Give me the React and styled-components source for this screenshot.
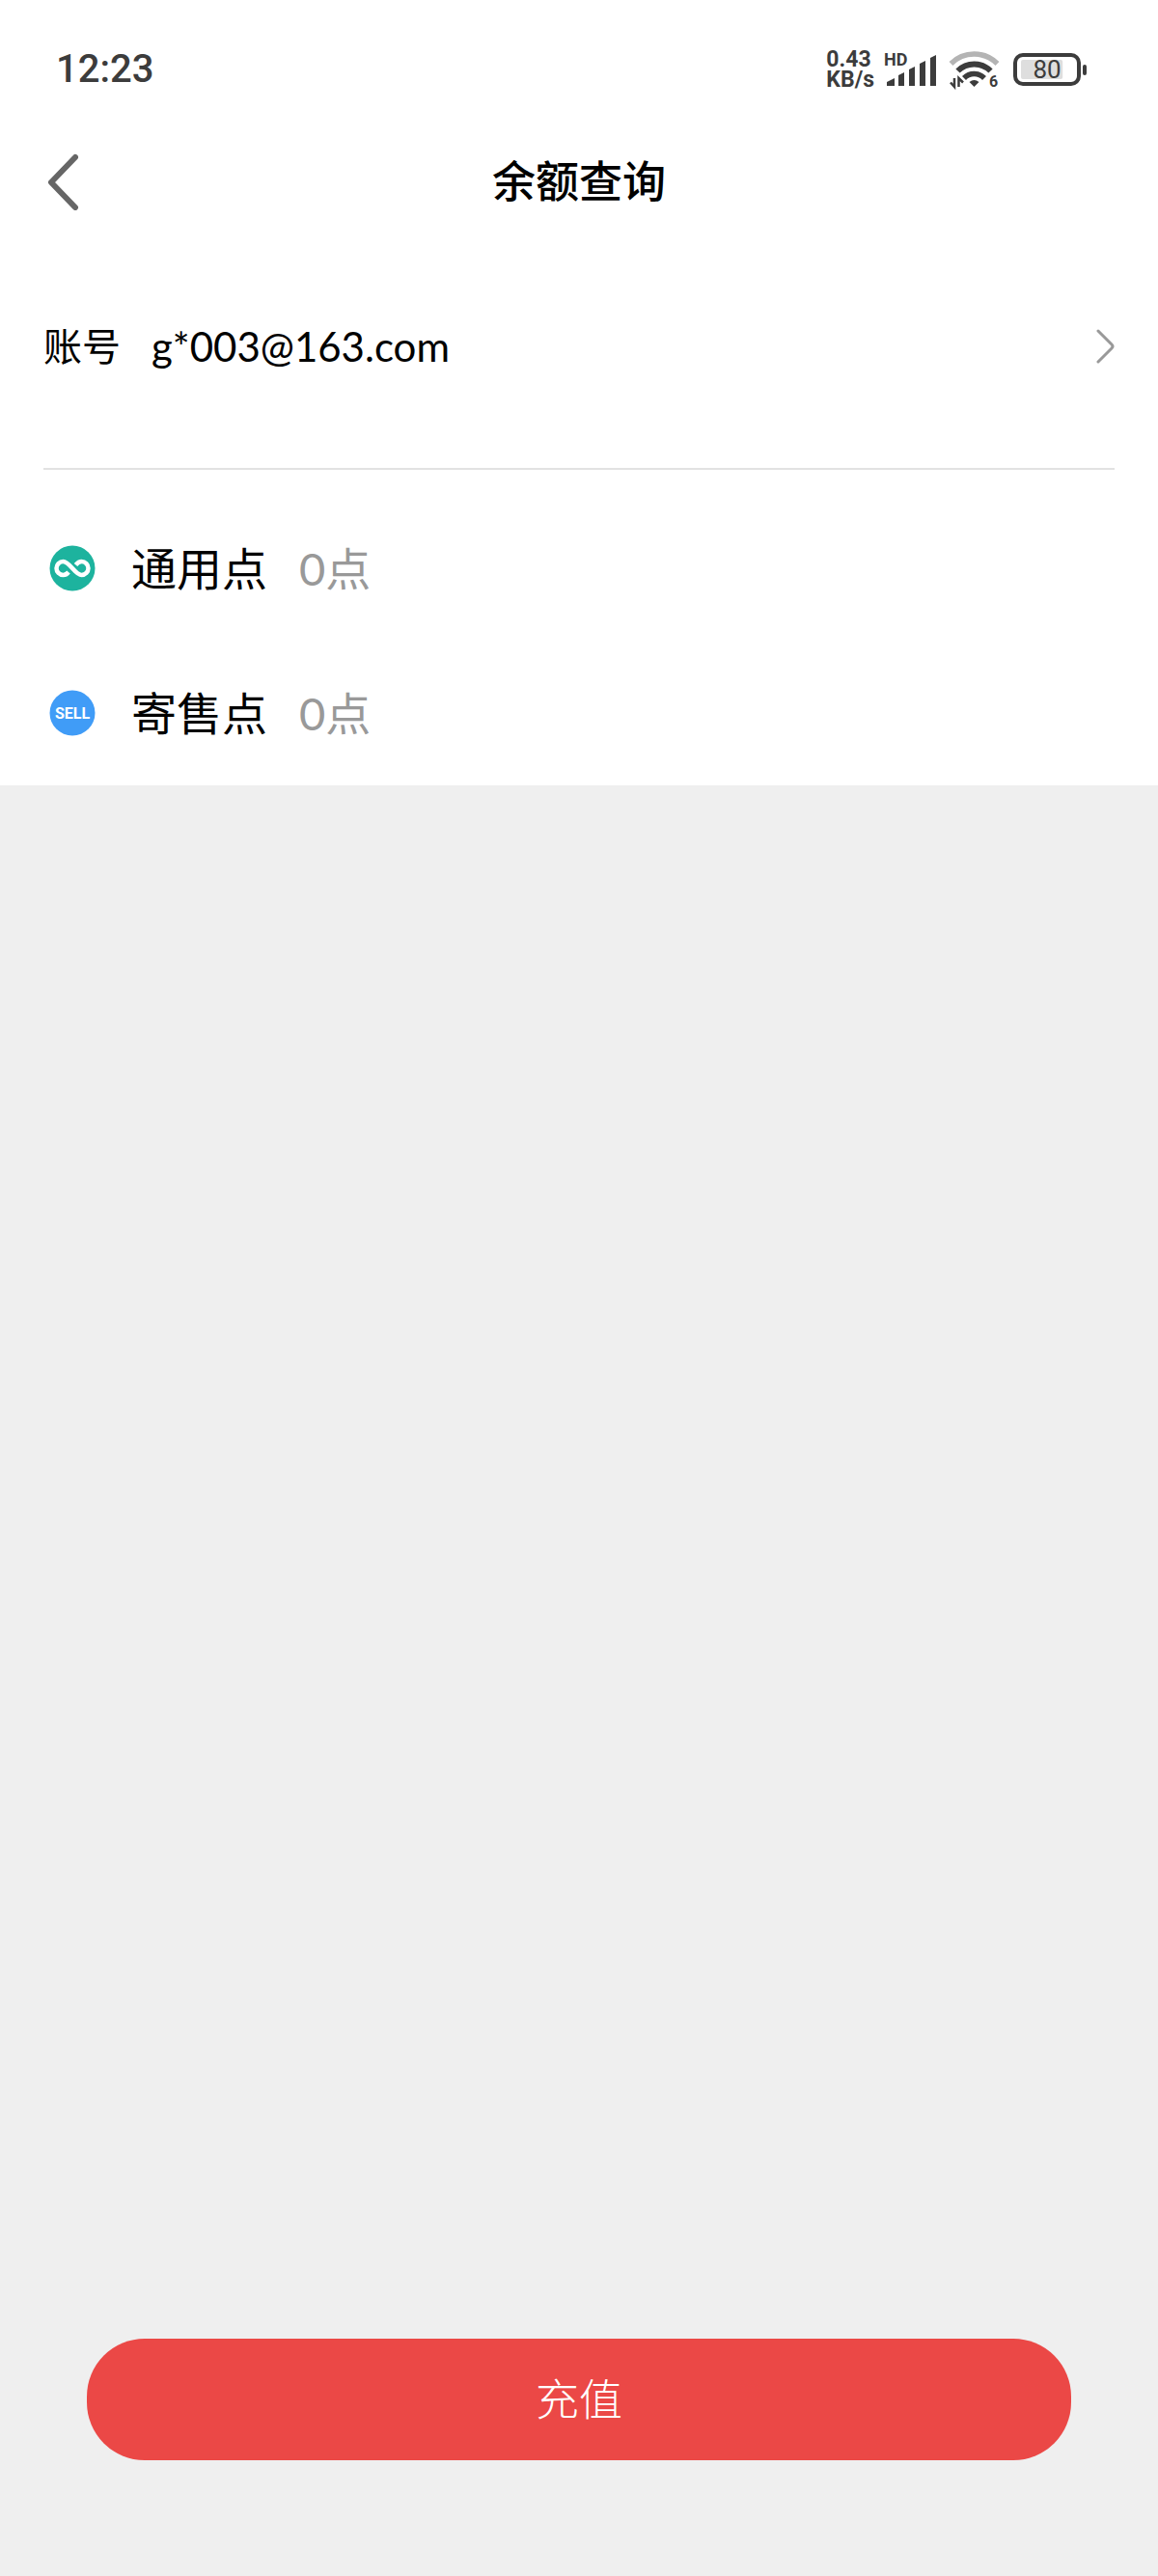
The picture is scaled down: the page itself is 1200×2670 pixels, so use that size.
// src/App.jsx

import React from 'react';
import styled, { createGlobalStyle } from 'styled-components';

const GlobalStyle = createGlobalStyle`
  *,
  *::before,
  *::after {
    box-sizing: border-box;
  }

  body {
    margin: 0;
    background-color: #efefef;
    color: #000;
    font-family: Lato, 'Noto Sans CJK SC', sans-serif;
  }

  button {
    margin: 0;
    padding: 0;
    border: none;
    background: none;
    color: inherit;
    font: inherit;
    cursor: pointer;
  }

  svg {
    display: block;
    flex-shrink: 0;
  }
`;

const Page = styled.div`
  display: flex;
  flex-direction: column;
  min-height: 100vh;
`;

// System status bar
const StatusBar = styled.div`
  display: flex;
  align-items: center;
  justify-content: space-between;
  height: 144px;
  padding: 0 74px 0 58px;
  background-color: #fff;
  color: #3c3c3c;
  font-family: Roboto, sans-serif;
`;

const Clock = styled.time`
  font-size: 40px;
  line-height: 48px;
  font-weight: 500;
`;

const StatusIcons = styled.div`
  display: flex;
  align-items: center;
  gap: 12px;
`;

const NetworkGroup = styled.div`
  display: flex;
  align-items: center;
  gap: 8px;
`;

const NetSpeed = styled.div`
  display: flex;
  flex-direction: column;
  font-size: 23px;
  line-height: 21px;
  font-weight: 700;
`;

// Page header with centered title
const Header = styled.header`
  display: grid;
  grid-template-columns: 88px 1fr 88px;
  align-items: center;
  height: 88px;
  padding: 0 22px;
  background-color: #fff;
`;

const BackButton = styled.button`
  display: flex;
  align-items: center;
  justify-content: center;
  height: 88px;
`;

const Title = styled.h1`
  margin: 0;
  font-size: 45px;
  line-height: 56px;
  font-weight: 500;
  text-align: center;
`;

const Panel = styled.section`
  padding: 0 45px;
  background-color: #fff;
`;

const AccountRow = styled.button`
  display: flex;
  align-items: center;
  width: 100%;
  height: 255px;
  border-bottom: 2px solid #e2e2e2;
  font-size: 40px;
  line-height: 48px;
  text-align: left;
`;

const AccountName = styled.span`
  flex: 1;
  margin-left: 32px;
  font-size: 42px;
`;

const PointList = styled.ul`
  margin: 0;
  padding: 27px 0 0 6px;
  list-style: none;
`;

const PointRow = styled.li`
  display: flex;
  align-items: center;
  height: 150px;
  font-size: 47px;
  line-height: 56px;
`;

const PointName = styled.span`
  margin-left: 37px;
`;

const PointValue = styled.span`
  margin-left: 33px;
  color: #999;
`;

// Footer sticks to the bottom of the page
const Footer = styled.footer`
  margin-top: auto;
  padding: 0 90px 120px;
`;

const RechargeButton = styled.button`
  width: 100%;
  height: 126px;
  border-radius: 60px;
  background-color: #eb4846;
  color: #fff;
  font-size: 45px;
  line-height: 56px;
  font-weight: 300;
`;

const SignalIcon = () => (
  <svg width="56" height="42" viewBox="-4 -4 56 42" fill="currentColor" aria-hidden="true">
    <text x="-2" y="13" fontSize="18" fontWeight="700">HD</text>
    <path d="M1 34V30L9 26V34Z" />
    <path d="M13 34V23L19 20V34Z" />
    <path d="M24 34V17L30 14V34Z" />
    <path d="M35 34V11L41 8V34Z" />
    <path d="M46 34V5L52 2V34Z" />
  </svg>
);

const WifiIcon = () => (
  <svg width="56" height="44" viewBox="-2 -3 56 44" fill="none" aria-hidden="true">
    <path d="M1.500 13A34 34 0 0 1 49.500 13" stroke="#b4b4b4" strokeWidth="5.500" />
    <path d="M8.500 20.500A24 24 0 0 1 42.500 20.500" stroke="currentColor" strokeWidth="6" />
    <path d="M15 28A14.500 14.500 0 0 1 36 28" stroke="currentColor" strokeWidth="5.500" />
    <path d="M20.500 32Q25.500 28 30.500 32L25.500 37Z" fill="currentColor" />
    <path d="M5 28V37L1 32.500M9.500 37V28L14 32.500" stroke="currentColor" strokeWidth="2.500" />
    <text x="41" y="37" fontSize="16" fontWeight="700" fill="currentColor">6</text>
  </svg>
);

const BatteryIcon = ({ level }) => (
  <svg width="76" height="34" viewBox="0 0 76 34" fill="none" aria-hidden="true">
    <rect x="8" y="7" width={level * 0.54} height="20" rx="2" fill="#dedede" />
    <rect x="2" y="2" width="66" height="30" rx="8" stroke="currentColor" strokeWidth="4" />
    <rect x="72" y="12" width="4" height="11" rx="2" fill="currentColor" />
    <text x="35" y="26" fontSize="26" textAnchor="middle" fill="currentColor">{level}</text>
  </svg>
);

const BackIcon = () => (
  <svg width="32" height="60" viewBox="0 0 32 60" fill="none" stroke="#666" strokeWidth="6" strokeLinecap="round" strokeLinejoin="round">
    <path d="M28 5L3 31L28 57" />
  </svg>
);

const ArrowIcon = () => (
  <svg width="20" height="36" viewBox="0 0 20 36" fill="none" stroke="#999" strokeWidth="3" strokeLinecap="round" strokeLinejoin="round">
    <path d="M3 2L17 16Q19 18 17 20L3 34" />
  </svg>
);

const CommonIcon = () => (
  <svg width="48" height="48" viewBox="0 0 48 48" fill="none" aria-hidden="true">
    <circle cx="24" cy="24" r="23.500" fill="#1db39e" />
    <path
      d="M20 28C18 30.500 16 31 14.500 31A7 7 0 0 1 14.500 17C21 17 27 31 33.500 31A7 7 0 0 0 33.500 17C31.500 17 29.500 18 27.500 20.500"
      stroke="#fff"
      strokeWidth="4.500"
    />
  </svg>
);

const SellIcon = () => (
  <svg width="48" height="48" viewBox="0 0 48 48" aria-hidden="true">
    <circle cx="24" cy="24" r="23.500" fill="#409cf7" />
    <text x="24" y="30" fontSize="16" fontWeight="700" fontFamily="Roboto, sans-serif" textAnchor="middle" fill="#fff">
      SELL
    </text>
  </svg>
);

const points = [
  { name: '通用点', value: 0, Icon: CommonIcon },
  { name: '寄售点', value: 0, Icon: SellIcon },
];

const App = () => {
  return (
    <Page>
      <GlobalStyle />
      <StatusBar>
        <Clock>12:23</Clock>
        <StatusIcons>
          <NetworkGroup>
            <NetSpeed>
              <span>0.43</span>
              <span>KB/s</span>
            </NetSpeed>
            <SignalIcon />
          </NetworkGroup>
          <WifiIcon />
          <BatteryIcon level={80} />
        </StatusIcons>
      </StatusBar>

      <Header>
        <BackButton type="button" aria-label="返回">
          <BackIcon />
        </BackButton>
        <Title>余额查询</Title>
      </Header>

      <main>
        <Panel>
          <AccountRow type="button">
            <span>账号</span>
            <AccountName>g*003@163.com</AccountName>
            <ArrowIcon />
          </AccountRow>
          <PointList>
            {points.map(({ name, value, Icon }) => (
              <PointRow key={name}>
                <Icon />
                <PointName>{name}</PointName>
                <PointValue>{value}点</PointValue>
              </PointRow>
            ))}
          </PointList>
        </Panel>
      </main>

      <Footer>
        <RechargeButton type="button">充值</RechargeButton>
      </Footer>
    </Page>
  );
};

export default App;
